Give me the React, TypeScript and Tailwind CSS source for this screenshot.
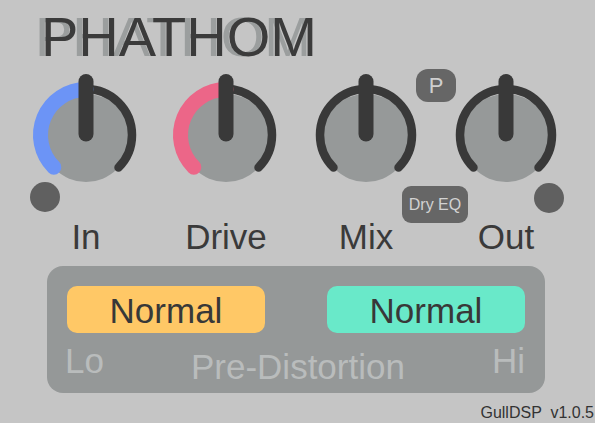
import React from "react";

type KnobProps = {
  label: string;
  accent?: string;
  children?: React.ReactNode;
};

// knob geometry, centre sits at (70, 62) inside a 140x120 box
const CX = 70;
const CY = 62;
const R = 46;

const pt = (deg: number, r: number) => {
  const a = (deg * Math.PI) / 180;
  return `${(CX + r * Math.cos(a)).toFixed(2)} ${(CY + r * Math.sin(a)).toFixed(2)}`;
};

const Knob = ({ label, accent, children }: KnobProps) => {
  return (
    <div className="relative flex w-[140px] flex-col items-center">
      <svg width="140" height="120" viewBox="0 0 140 120">
        <circle cx={CX} cy={CY + 3} r="44" fill="#969999" />
        {/* dark track, bottom-left over the top to bottom-right */}
        <path
          d={`M ${pt(135, R)} A ${R} ${R} 0 1 1 ${pt(45, R)}`}
          fill="none"
          stroke="#393939"
          strokeWidth="8.5"
          strokeLinecap="round"
        />
        {accent && (
          <path
            d={`M ${pt(135, 45.5)} A 45.5 45.5 0 0 1 ${pt(270, 45.5)}`}
            fill="none"
            stroke={accent}
            strokeWidth="15"
            strokeLinecap="round"
          />
        )}
        <line
          x1={CX}
          y1={CY - 53.5}
          x2={CX}
          y2={CY - 1}
          stroke="#393939"
          strokeWidth="15"
          strokeLinecap="round"
        />
      </svg>
      <div className="mt-[26px] text-[35px] leading-none text-[#3a3a3a]">{label}</div>
      {children}
    </div>
  );
};

export default function App() {
  return (
    <div
      className="flex h-[423px] w-[595px] flex-col overflow-hidden bg-[#c5c5c5] pt-[10px]"
      style={{ fontFamily: '"Liberation Sans", Arial, sans-serif' }}
    >
      <div className="-mt-[1px] h-[56px] pl-[41px] text-[56px] leading-none text-[#3b3b3b] [text-shadow:-6px_0_0_#9b9e9e]">
        PHATHOM
      </div>

      <div className="relative mt-[8px] flex pl-[16px]">
        <Knob label="In" accent="#6c94f6">
          <div className="absolute left-[14px] top-[109px] h-[30px] w-[30px] rounded-full bg-[#606060]" />
        </Knob>
        <Knob label="Drive" accent="#ec6688" />
        <Knob label="Mix" />
        <Knob label="Out">
          <div className="absolute left-[98px] top-[110px] h-[30px] w-[30px] rounded-full bg-[#606060]" />
        </Knob>

        <div className="absolute left-[416px] top-[-4px] flex h-[33px] w-[40px] items-center justify-center rounded-[12px] bg-[#666666] text-[22px] leading-none text-[#cfcfcf]">
          P
        </div>
        <div className="absolute left-[402px] top-[113px] flex h-[37px] w-[66px] items-center justify-center rounded-[9px] bg-[#666666] text-[16px] leading-none text-[#d2d2d2]">
          Dry EQ
        </div>
      </div>

      <div className="ml-[47px] mt-[12px] flex h-[127px] w-[498px] flex-col rounded-[16px] bg-[#959898] px-[20px] pt-[20px]">
        <div className="flex justify-between">
          <div className="flex h-[47px] w-[198px] items-center justify-center rounded-[10px] bg-[#ffc866] pt-[2px] text-[35px] leading-none text-[#383838]">
            Normal
          </div>
          <div className="flex h-[47px] w-[198px] items-center justify-center rounded-[10px] bg-[#69e9c9] pt-[2px] text-[35px] leading-none text-[#383838]">
            Normal
          </div>
        </div>
        <div className="mt-[10px] flex items-start justify-between text-[35px] leading-none text-[#b9bcbc]">
          <span className="-ml-[2px]">Lo</span>
          <span className="mt-[6px]">Pre-Distortion</span>
          <span>Hi</span>
        </div>
      </div>

      <div className="mt-[12px] whitespace-pre pr-[1px] text-right text-[16px] leading-none text-[#333333]">
        GullDSP  v1.0.5
      </div>
    </div>
  );
}
